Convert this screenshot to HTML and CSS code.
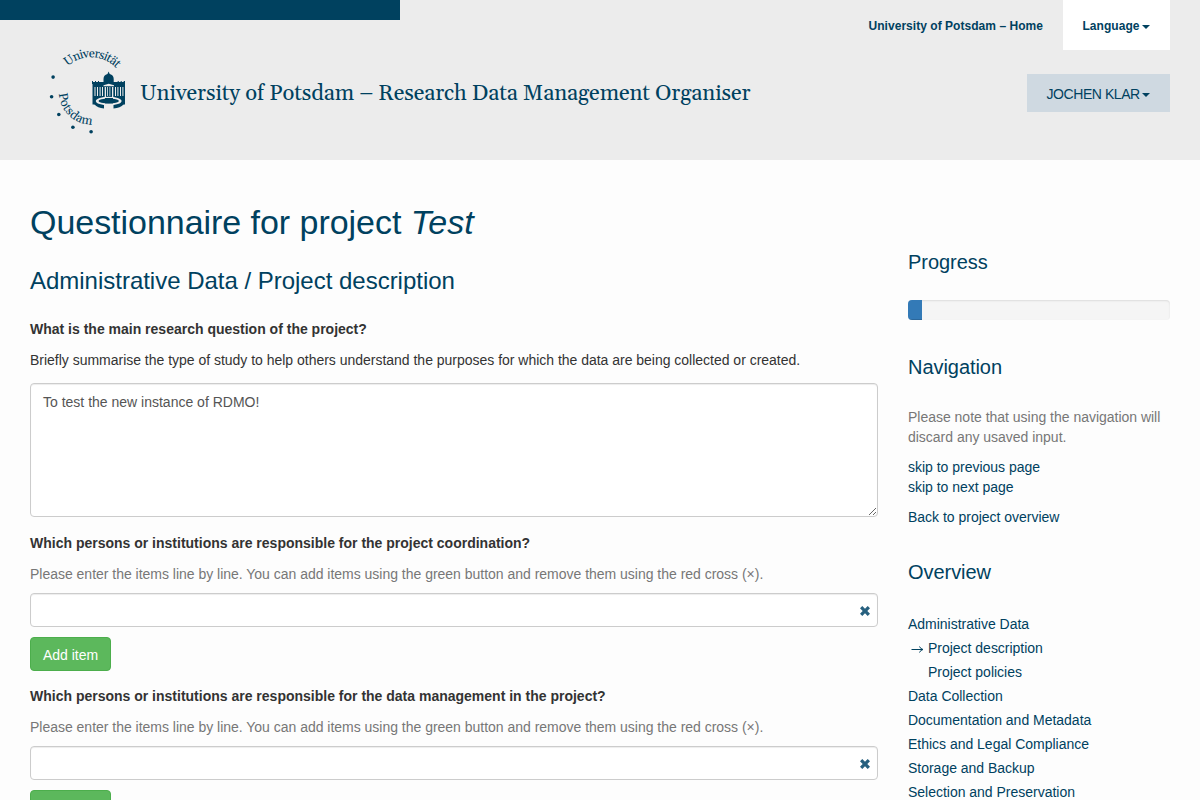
FILE: index.html
```html
<!DOCTYPE html>
<html lang="en">
<head>
<meta charset="utf-8">
<title>University of Potsdam – Research Data Management Organiser</title>
<link rel="stylesheet" href="styles.css">
</head>
<body>
<header class="header">
  <div class="accent"></div>
  <div class="brand">
    <svg class="logo" viewBox="46 42 84 96" width="84" height="96">
      <defs>
        <path id="arc-top" d="M67.500 66.500A34.400 34.400 0 0 1 123 79"/>
        <path id="arc-bottom" d="M59 93.500A32.500 32.500 0 0 0 100 123.500"/>
      </defs>
      <g class="ink">
        <text class="logo-text"><textPath href="#arc-top" textLength="54">Universität</textPath></text>
        <text class="logo-text"><textPath href="#arc-bottom" textLength="50">Potsdam</textPath></text>
        <circle cx="53.1" cy="77.1" r="1.8"/><circle cx="51.6" cy="96.7" r="1.8"/><circle cx="58.8" cy="114.5" r="1.8"/><circle cx="72.9" cy="127.3" r="1.8"/><circle cx="91.1" cy="131.7" r="1.8"/>
        <path d="M92 81h1v1h2v-1h1v1h2v-1h1v1h4.500v-3q0-4 4-5l1.100-2.500 1.100 2.500q4 1 4 5v3h4v-1h1v1h2v-1h1v1h2v-1h1.300v3H92z"/>
        <path d="M92.500 84h32.500v20.500H92.500z"/>
        <path d="M104 108.500v-5h-9.500v1q3 3.500 9.500 4zM113.500 108.500v-5h10v1q-3 3.500-10 4z"/>
      </g>
      <g class="paper">
        <path d="M103.500 85.300l5.200-1.500 5.300 1.500v1h-10.500zM94.500 87h1v9h-1zM97 87h1v9h-1zM99.600 87h1v9h-1zM102 87h1v9h-1zM104.700 87h1.300v10h-1.300zM107.200 87h.8v9h-.8zM109.500 87h.8v9h-.8zM112 87h1.300v10H112zM115 87h1v9h-1zM117.400 87h1v9h-1zM120 87h1v9h-1zM122.400 87h1v9h-1z"/>
        <path fill-rule="evenodd" d="M95.800 101a12.900 4.300 0 0 1 25.800 0a12.900 4.300 0 0 1-25.800 0M98.500 101a10.200 2.600 0 0 0 20.400 0a10.200 2.600 0 0 0-20.400 0"/>
        <path d="M104.500 103.500h8.500v1.500h-8.500z"/>
      </g>
      <path class="ink" d="M105 98h8v5.500h-8z"/>
    </svg>
    <span class="brand-title">University of Potsdam – Research Data Management Organiser</span>
  </div>
  <nav class="top-nav">
    <div class="links"><a class="home">University of Potsdam – Home</a><a class="language">Language<i class="caret"></i></a></div>
    <a class="user">JOCHEN KLAR<i class="caret"></i></a>
  </nav>
</header>
<div class="page">
  <main class="main">
    <h1>Questionnaire for project <em>Test</em></h1>
    <h2>Administrative Data / Project description</h2>
    <section class="question first">
      <label>What is the main research question of the project?</label>
      <p>Briefly summarise the type of study to help others understand the purposes for which the data are being collected or created.</p>
      <textarea class="control area">To test the new instance of RDMO!</textarea>
    </section>
    <section class="question">
      <label>Which persons or institutions are responsible for the project coordination?</label>
      <p class="muted">Please enter the items line by line. You can add items using the green button and remove them using the red cross (×).</p>
      <div class="control item"><svg class="cross" viewBox="0 0 10 10"><path d="M0 2.300L2.300 0 5 2.700 7.700 0 10 2.300 7.300 5 10 7.700 7.700 10 5 7.300 2.300 10 0 7.700 2.700 5z"/></svg></div>
      <button class="add">Add item</button>
    </section>
    <section class="question">
      <label>Which persons or institutions are responsible for the data management in the project?</label>
      <p class="muted">Please enter the items line by line. You can add items using the green button and remove them using the red cross (×).</p>
      <div class="control item"><svg class="cross" viewBox="0 0 10 10"><path d="M0 2.300L2.300 0 5 2.700 7.700 0 10 2.300 7.300 5 10 7.700 7.700 10 5 7.300 2.300 10 0 7.700 2.700 5z"/></svg></div>
      <button class="add" aria-label="Add item"></button>
    </section>
  </main>
  <aside class="sidebar">
    <h3>Progress</h3>
    <div class="progress"><div class="bar"></div></div>
    <h3>Navigation</h3>
    <p class="muted">Please note that using the navigation will discard any usaved input.</p>
    <p><a>skip to previous page</a><br><a>skip to next page</a></p>
    <p><a>Back to project overview</a></p>
    <h3 class="overview-title">Overview</h3>
    <ul class="overview">
      <li>Administrative Data</li>
      <li class="sub"><svg class="arrow" viewBox="0 0 20 24"><path d="M3.500 13.500h11M11.500 10.500q1 2.500 3.500 3q-2.500.5-3.500 3"/></svg>Project description</li>
      <li class="sub"><span class="arrow"></span>Project policies</li>
      <li>Data Collection</li>
      <li>Documentation and Metadata</li>
      <li>Ethics and Legal Compliance</li>
      <li>Storage and Backup</li>
      <li>Selection and Preservation</li>
    </ul>
  </aside>
</div>
</body>
</html>
```
FILE: styles.css
```css
* { box-sizing: border-box; }
html, body { height: 800px; overflow: hidden; }
body { margin: 0; background: #fdfdfd; color: #333; font: 14px/20px "Helvetica Neue", Helvetica, "Liberation Sans", Arial, sans-serif; letter-spacing: -.015px; }
.header { height: 160px; background: #ececec; display: grid; grid-template: 20px 140px / 1fr auto; color: #00415f; }
.accent { width: 400px; background: #00415f; }
.brand { grid-row: 2; grid-column: 1; display: flex; padding: 22px 0 0 46px; }
.logo { flex: none; }
.logo-text { font: 12.500px Georgia, Gelasio, "Liberation Serif", serif; }
.ink { fill: #00415f; }
.paper { fill: #ececec; }
.brand-title { font: 22px/30px Georgia, Gelasio, "Liberation Serif", serif; letter-spacing: -.105px; white-space: nowrap; padding: 37px 0 0 10px; }
.top-nav { grid-row: 1 / 3; grid-column: 2; display: flex; flex-direction: column; align-items: flex-end; padding-right: 30px; gap: 24px; }
.links { display: flex; height: 50px; font-size: 12px; font-weight: bold; line-height: 50px; letter-spacing: .04px; }
.home { padding: 1px 20px 0 0; }
.language { width: 107px; height: 50px; padding: 1px 0 0 19.500px; background: #fff; }
.user { width: 143px; height: 38px; padding: 1px 0 0 19.500px; font-size: 14px; line-height: 38px; letter-spacing: -.43px; background: #cfd9e1; white-space: nowrap; }
.caret { display: inline-block; margin-left: 2px; vertical-align: middle; border: 4px solid transparent; border-top-color: #00415f; border-bottom: 0; }
.page { display: grid; grid-template-columns: 848px 262px; gap: 30px; padding: 0 30px; }
h1, h2, h3 { margin: 0; font-weight: normal; color: #00415f; }
h1 { font-size: 34px; line-height: 40px; padding-top: 42px; white-space: nowrap; letter-spacing: -.04px; }
h2 { font-size: 24px; line-height: 26px; margin: 26px 0 25px; }
.question { margin-bottom: 15px; }
.question.first { margin-bottom: 16px; }
.question label { display: block; font-weight: bold; letter-spacing: 0; }
.question p { margin: 11px 0 13px; white-space: nowrap; }
.question p.muted { margin-bottom: 9px; }
.muted { color: #777; }
.control { display: block; width: 100%; background: #fff; border: 1px solid #ccc; border-radius: 4px; box-shadow: inset 0 1px 1px rgba(0,0,0,.075); color: #555; }
.area { height: 134px; padding: 8px 12px; font: inherit; }
.item { height: 34px; display: flex; align-items: center; justify-content: flex-end; padding: 1px 7px 0 0; }
.cross { width: 10px; height: 10px; fill: #27607f; }
.add { display: block; height: 34px; width: 81px; padding: 2px 0 0; margin-top: 10px; background: #5cb85c; border: 1px solid #4cae4c; border-radius: 4px; color: #fff; font: inherit; }
.sidebar { padding-top: 91px; }
.sidebar h3 { font-size: 20px; line-height: 22px; letter-spacing: -.05px; }
.sidebar p { margin: 0 0 10px; }
.sidebar a, .overview { color: #00415f; }
.progress { height: 20px; margin: 27px 0 36px; background: #f5f5f5; border-radius: 4px; overflow: hidden; box-shadow: inset 0 1px 2px rgba(0,0,0,.1); }
.bar { width: 14px; height: 20px; background: #337ab7; box-shadow: inset 0 -1px 0 rgba(0,0,0,.15); }
.progress + h3 { margin-bottom: 29px; }
.sidebar .overview-title { margin: 34px 0 29px; }
.overview { list-style: none; margin: 0; padding: 0; line-height: 24px; }
.sub { display: flex; }
.arrow { width: 20px; height: 24px; fill: none; stroke: #00415f; stroke-width: 1; }
```
